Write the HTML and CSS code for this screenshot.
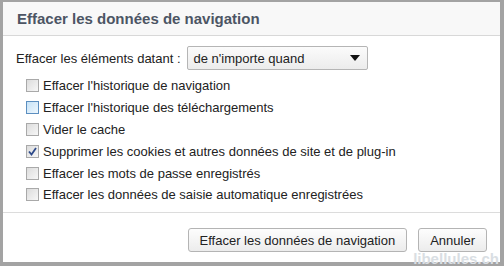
FILE: index.html
```html
<!DOCTYPE html>
<html lang="fr">
<head>
    <meta charset="UTF-8">
    <title>Effacer les données de navigation</title>
    <link rel="stylesheet" href="styles.css">
</head>
<body>
    <div class="dialog">
        <div class="title">Effacer les données de navigation</div>
        <div class="content">
            <div class="period">
                <span>Effacer les éléments datant :</span>
                <div class="select">
                    <span>de n'importe quand</span>
                    <span class="arrow"></span>
                </div>
            </div>
            <ul class="options">
                <li><span class="box"></span>Effacer l'historique de navigation</li>
                <li><span class="box focus"></span>Effacer l'historique des téléchargements</li>
                <li><span class="box"></span>Vider le cache</li>
                <li><span class="box checked">
                    <svg width="9" height="9" viewBox="0 0 9 9"><path d="M1 4.5 L3.5 7.5 L8 1" fill="none" stroke="#2d4a8a" stroke-width="1.8"/></svg>
                </span>Supprimer les cookies et autres données de site et de plug-in</li>
                <li><span class="box"></span>Effacer les mots de passe enregistrés</li>
                <li><span class="box"></span>Effacer les données de saisie automatique enregistrées</li>
            </ul>
        </div>
        <div class="footer">
            <button class="btn">Effacer les données de navigation</button>
            <button class="btn">Annuler</button>
        </div>
        <span class="watermark">libellules.ch</span>
    </div>
</body>
</html>
```

FILE: styles.css
```css
body {
    margin: 0;
    background-color: #a3a3a3;
    font-family: Arial, "Liberation Sans", sans-serif;
    font-size: 13px;
    color: #222;
    height: 266px;
    overflow: hidden;
}
.dialog {
    margin: 2px 4px 0 3px;
    height: 260px;
    background-color: #fff;
    position: relative;
}
.title {
    height: 33px;
    line-height: 33px;
    padding-left: 14px;
    background-color: #f8f8f8;
    border-bottom: 1px solid #d8d8d8;
    font-size: 15px;
    font-weight: bold;
    color: #4c5564;
}
.content {
    padding: 10px 0 0 13px;
    border-bottom: 1px solid #dcdcdc;
    height: 166px;
}
.period {
    display: flex;
    align-items: center;
    gap: 6px;
}
.select {
    width: 166px;
    height: 22px;
    border: 1px solid #b5b5b5;
    border-radius: 2px;
    background: linear-gradient(#fbfbfb, #ececec);
    display: flex;
    align-items: center;
    justify-content: space-between;
    padding: 0 7px 0 6px;
}
.arrow {
    width: 0;
    height: 0;
    border-left: 5px solid transparent;
    border-right: 5px solid transparent;
    border-top: 6px solid #111;
}
.options {
    list-style: none;
    margin: 5px 0 0 10px;
    padding: 0;
}
.options li {
    display: flex;
    align-items: center;
    height: 21.8px;
}
.box {
    width: 11px;
    height: 11px;
    border: 1px solid #a9a9a9;
    background: linear-gradient(135deg, #dcdcdc, #f7f7f7);
    margin-right: 4px;
    display: flex;
    align-items: center;
    justify-content: center;
}
.box.focus {
    border-color: #5c8fc0;
    background: linear-gradient(135deg, #c7e3f8, #eef7fd);
}
.footer {
    display: flex;
    justify-content: flex-end;
    gap: 11px;
    padding: 15px 13px 0 0;
}
.btn {
    font-family: Arial, "Liberation Sans", sans-serif;
    font-size: 13px;
    color: #222;
    height: 24px;
    padding: 0 11px;
    border: 1px solid #b4b4b4;
    border-radius: 3px;
    background: linear-gradient(#fdfdfd, #ececec);
}
.watermark {
    position: absolute;
    right: 1px;
    top: 251px;
    font-size: 15px;
    line-height: 12px;
    font-weight: bold;
    color: #d9dee3;
}
```
